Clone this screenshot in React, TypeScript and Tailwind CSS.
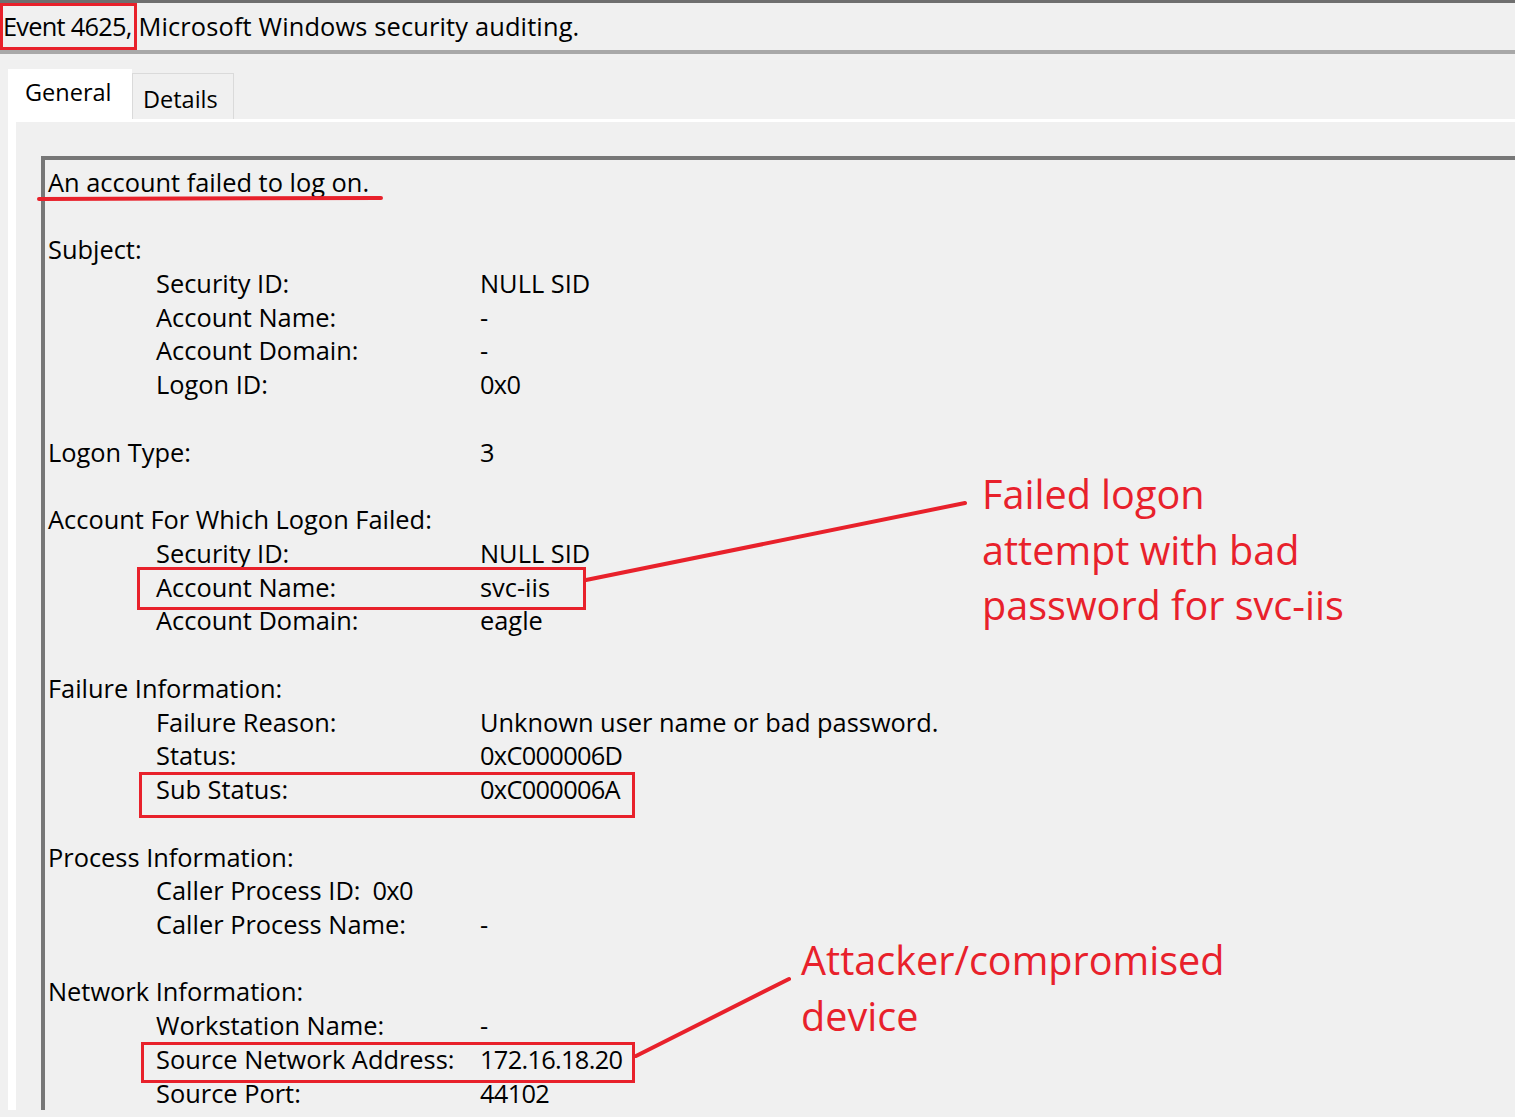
import React from "react";

type Row =
  | { kind: "blank" }
  | { kind: "head"; text: string; value?: string }
  | { kind: "item"; label: string; value: string; inline?: boolean; num?: boolean };

const rows: Row[] = [
  { kind: "head", text: "An account failed to log on." },
  { kind: "blank" },
  { kind: "head", text: "Subject:" },
  { kind: "item", label: "Security ID:", value: "NULL SID" },
  { kind: "item", label: "Account Name:", value: "-" },
  { kind: "item", label: "Account Domain:", value: "-" },
  { kind: "item", label: "Logon ID:", value: "0x0", num: true },
  { kind: "blank" },
  { kind: "head", text: "Logon Type:", value: "3" },
  { kind: "blank" },
  { kind: "head", text: "Account For Which Logon Failed:" },
  { kind: "item", label: "Security ID:", value: "NULL SID" },
  { kind: "item", label: "Account Name:", value: "svc-iis" },
  { kind: "item", label: "Account Domain:", value: "eagle" },
  { kind: "blank" },
  { kind: "head", text: "Failure Information:" },
  { kind: "item", label: "Failure Reason:", value: "Unknown user name or bad password." },
  { kind: "item", label: "Status:", value: "0xC000006D", num: true },
  { kind: "item", label: "Sub Status:", value: "0xC000006A", num: true },
  { kind: "blank" },
  { kind: "head", text: "Process Information:" },
  { kind: "item", label: "Caller Process ID:", value: "0x0", inline: true, num: true },
  { kind: "item", label: "Caller Process Name:", value: "-" },
  { kind: "blank" },
  { kind: "head", text: "Network Information:" },
  { kind: "item", label: "Workstation Name:", value: "-" },
  { kind: "item", label: "Source Network Address:", value: "172.16.18.20", num: true },
  { kind: "item", label: "Source Port:", value: "44102", num: true },
];

function Line({ row }: { row: Row }) {
  if (row.kind === "blank") return <div className="h-[33.74px]" />;
  if (row.kind === "head")
    return (
      <div className="flex h-[33.74px] items-center whitespace-nowrap">
        <span className="w-[432px] shrink-0">{row.text}</span>
        {row.value && <span>{row.value}</span>}
      </div>
    );
  const valueCls = row.num ? "tracking-[-0.7px]" : "";
  return (
    <div className="flex h-[33.74px] items-center whitespace-nowrap pl-[108px]">
      {row.inline ? (
        <span>
          {row.label}
          <span className={"ml-[12px] " + valueCls}>{row.value}</span>
        </span>
      ) : (
        <>
          <span className="w-[324px] shrink-0">{row.label}</span>
          <span className={valueCls}>{row.value}</span>
        </>
      )}
    </div>
  );
}

export default function App() {
  const red = "#e8212b";
  return (
    <div
      className="relative h-[1117px] w-[1515px] overflow-hidden bg-[#f0f0f0] text-black"
      style={{ fontFamily: '"Open Sans", "Noto Sans", sans-serif' }}
    >
      {/* Title bar */}
      <div className="flex h-[54px] items-center border-t-[3px] border-b-[4px] border-t-[#6f6f6f] border-b-[#a8a8a8] pl-[3px] text-[25.4px] leading-none whitespace-nowrap">
        <span className="tracking-[-0.75px]">Event 4625,</span>
        <span className="tracking-[0.15px]">&nbsp;Microsoft Windows security auditing.</span>
      </div>

      {/* Tabs */}
      <div className="flex items-end pl-[8px] pt-[15px]">
        <div className="flex h-[50px] w-[124px] items-center bg-white pl-[17px] pb-[2px] text-[23.5px]">
          General
        </div>
        <div className="flex h-[46px] w-[102px] items-center border border-b-0 border-[#dadada] pl-[10px] pt-[6px] text-[23.5px]">
          Details
        </div>
      </div>

      {/* Tab page */}
      <div className="ml-[8px] border-t-[3px] border-l-[8px] border-white pl-[25px] pt-[34px]">
        <div className="border-t-[4px] border-l-[4px] border-t-[#777777] border-l-[#777777] pl-[3px] pt-[5px] text-[25.4px]">
          {rows.map((r, i) => (
            <Line key={i} row={r} />
          ))}
        </div>
      </div>

      {/* Annotation overlay */}
      <svg
        className="pointer-events-none absolute left-0 top-0"
        width={1515}
        height={1117}
        viewBox="0 0 1515 1117"
      >
        <g fill="none" stroke={red} strokeWidth={3}>
          <rect x={1.5} y={4.5} width={134} height={44} />
          <rect x={138.5} y={568.5} width={446} height={40} />
          <rect x={140.5} y={773.5} width={493} height={43} />
          <rect x={142.5} y={1043.5} width={491} height={38} />
        </g>
        <g stroke={red} strokeWidth={4} strokeLinecap="round">
          <line x1={39} y1={199} x2={381} y2={198} />
          <line x1={586} y1={580} x2={965} y2={503} />
          <line x1={636} y1={1056} x2={789} y2={979} />
        </g>
      </svg>

      <div
        className="absolute left-[982px] top-[467px] text-[39.6px] leading-[55.5px] whitespace-nowrap"
        style={{ color: red }}
      >
        <div>Failed logon</div>
        <div>attempt with bad</div>
        <div>password for svc-iis</div>
      </div>
      <div
        className="absolute left-[801px] top-[933px] text-[39.6px] leading-[55.5px] whitespace-nowrap"
        style={{ color: red }}
      >
        <div>Attacker/compromised</div>
        <div>device</div>
      </div>
    </div>
  );
}
